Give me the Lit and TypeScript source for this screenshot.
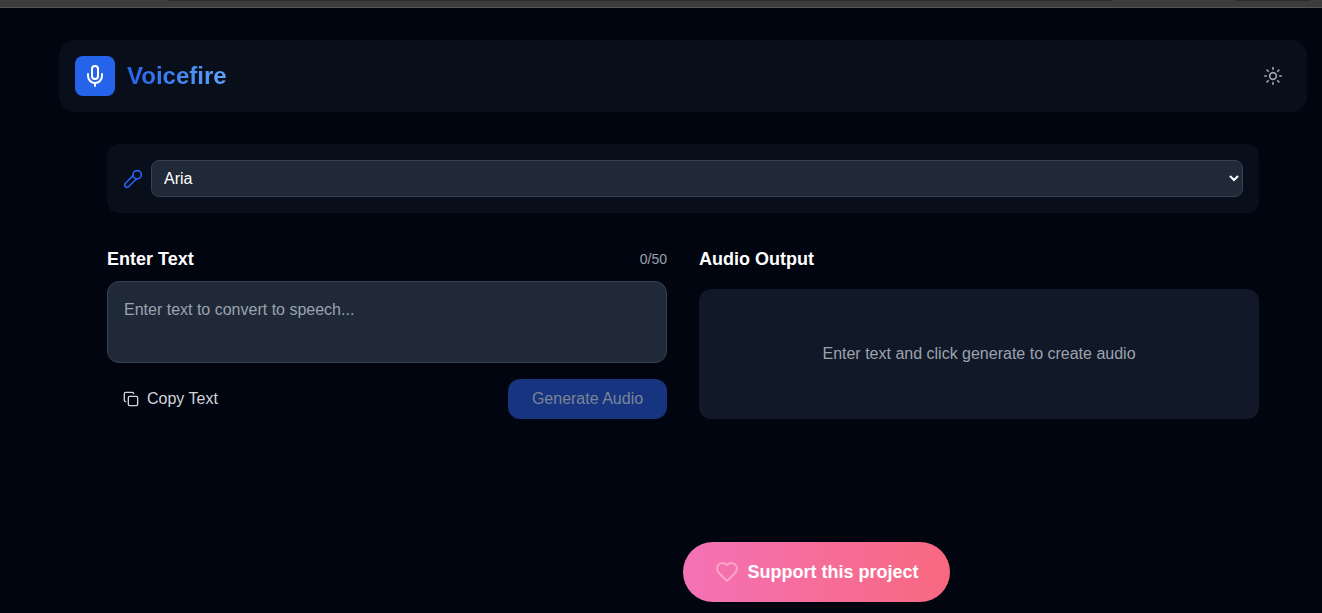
import { LitElement, css, html } from 'lit'
import { customElement } from 'lit/decorators.js'

@customElement('app-root')
export class AppRoot extends LitElement {
  static styles = css`
    :host {
      display: block;
      height: 613px;
      overflow: hidden;
      background: #01050f;
      font-family: "Liberation Sans", Arial, sans-serif;
      color: #fff;
    }
    /* sliver of the browser chrome along the top edge */
    .strip {
      height: 8px;
      background: #3c3c3c;
      border-bottom: 1px solid #555;
      box-sizing: border-box;
      display: flex;
      align-items: flex-start;
    }
    .tab {
      height: 1px;
      background: #2b2b2b;
    }
    .tab.one {
      width: 943px;
      margin-left: 168px;
    }
    .tab.two {
      width: 75px;
      margin-left: 124px;
    }
    .page {
      padding: 32px 15px 0 59px;
    }
    .header {
      height: 72px;
      box-sizing: border-box;
      padding: 16px;
      border-radius: 16px;
      background: #090e1b;
      display: flex;
      align-items: center;
      justify-content: space-between;
    }
    .brand {
      display: flex;
      align-items: center;
      gap: 12px;
    }
    .logo {
      width: 40px;
      height: 40px;
      border-radius: 8px;
      background: #2563eb;
      display: flex;
      align-items: center;
      justify-content: center;
    }
    .name {
      font-size: 24px;
      font-weight: 700;
      background: linear-gradient(to right, #2563eb, #60a5fa);
      -webkit-background-clip: text;
      background-clip: text;
      color: transparent;
    }
    .theme {
      display: flex;
      margin-right: 8px;
    }
    .main {
      width: 1152px;
      margin: 32px 0 0 48px;
    }
    .voice {
      height: 69px;
      box-sizing: border-box;
      padding: 16px;
      border-radius: 12px;
      background: #090e1b;
      display: flex;
      align-items: center;
      gap: 8px;
    }
    .voice svg {
      flex: none;
    }
    select {
      flex: 1;
      height: 37px;
      padding: 0 8px;
      border: 1px solid #374151;
      border-radius: 8px;
      background: #1f2937;
      color: #fff;
      font: 16px "Liberation Sans", Arial, sans-serif;
    }
    .columns {
      display: grid;
      grid-template-columns: 560px 560px;
      gap: 32px;
      margin-top: 32px;
    }
    .head {
      display: flex;
      align-items: center;
      justify-content: space-between;
      height: 28px;
    }
    h2 {
      margin: 0;
      font-size: 18px;
      line-height: 28px;
      font-weight: 700;
    }
    .count {
      font-size: 14px;
      color: #9ca3af;
    }
    textarea {
      display: block;
      width: 100%;
      height: 82px;
      box-sizing: border-box;
      margin-top: 8px;
      padding: 16px;
      border: 1px solid #374151;
      border-radius: 12px;
      background: #1f2937;
      color: #fff;
      resize: none;
      outline: none;
      font: 16px/24px "Liberation Sans", Arial, sans-serif;
    }
    textarea::placeholder {
      color: #9ca3af;
      opacity: 1;
    }
    .actions {
      display: flex;
      align-items: center;
      justify-content: space-between;
      margin-top: 16px;
    }
    .copy {
      display: flex;
      align-items: center;
      gap: 8px;
      padding: 8px 16px;
      border: 0;
      background: none;
      color: #d1d5db;
      font: 16px/24px "Liberation Sans", Arial, sans-serif;
    }
    .generate {
      width: 159px;
      height: 40px;
      border: 0;
      border-radius: 12px;
      background: #16347f;
      color: #7b8498;
      font: 16px/24px "Liberation Sans", Arial, sans-serif;
    }
    .output {
      height: 130px;
      margin-top: 16px;
      border-radius: 12px;
      background: #111827;
      color: #9ca3af;
      font-size: 16px;
      display: flex;
      align-items: center;
      justify-content: center;
    }
    /* the button starts at the middle of the main column */
    .footer {
      margin-top: 123px;
      padding-left: 50%;
    }
    .support {
      width: 267px;
      height: 60px;
      border: 0;
      border-radius: 30px;
      background: linear-gradient(to right, #f472b6, #f8687f);
      color: #fff;
      font: 700 18px/28px "Liberation Sans", Arial, sans-serif;
      display: flex;
      align-items: center;
      justify-content: center;
      gap: 9px;
    }
  `

  render() {
    return html`
      <div class="strip"><div class="tab one"></div><div class="tab two"></div></div>
      <div class="page">
        <header class="header">
          <div class="brand">
            <div class="logo">
              <svg width="24" height="24" viewBox="0 0 24 24" fill="none" stroke="#fff" stroke-width="2" stroke-linecap="round" stroke-linejoin="round">
                <path d="M12 2a3 3 0 0 0-3 3v7a3 3 0 0 0 6 0V5a3 3 0 0 0-3-3Z"></path>
                <path d="M19 10v2a7 7 0 0 1-14 0v-2"></path>
                <line x1="12" x2="12" y1="19" y2="22"></line>
              </svg>
            </div>
            <span class="name">Voicefire</span>
          </div>
          <div class="theme">
            <svg width="20" height="20" viewBox="0 0 24 24" fill="none" stroke="#9ca3af" stroke-width="2" stroke-linecap="round" stroke-linejoin="round">
              <circle cx="12" cy="12" r="4"></circle>
              <path d="M12 2v2M12 20v2M4.93 4.93l1.41 1.41M17.66 17.66l1.41 1.41M2 12h2M20 12h2M6.34 17.66l-1.41 1.41M19.07 4.93l-1.41 1.41"></path>
            </svg>
          </div>
        </header>
        <main class="main">
          <section class="voice">
            <svg width="20" height="20" viewBox="0 0 24 24" fill="none" stroke="#2563eb" stroke-width="2" stroke-linecap="round" stroke-linejoin="round">
              <path d="m12 8-9.04 9.06a2.82 2.82 0 1 0 3.98 3.98L16 12"></path>
              <circle cx="17" cy="7" r="5"></circle>
            </svg>
            <select><option>Aria</option></select>
          </section>
          <div class="columns">
            <section>
              <div class="head">
                <h2>Enter Text</h2>
                <span class="count">0/50</span>
              </div>
              <textarea placeholder="Enter text to convert to speech..."></textarea>
              <div class="actions">
                <button class="copy">
                  <svg width="16" height="16" viewBox="0 0 24 24" fill="none" stroke="currentColor" stroke-width="2" stroke-linecap="round" stroke-linejoin="round">
                    <rect width="14" height="14" x="8" y="8" rx="2" ry="2"></rect>
                    <path d="M4 16c-1.1 0-2-.9-2-2V4c0-1.1.9-2 2-2h10c1.1 0 2 .9 2 2"></path>
                  </svg>
                  Copy Text
                </button>
                <button class="generate">Generate Audio</button>
              </div>
            </section>
            <section>
              <div class="head"><h2>Audio Output</h2></div>
              <div class="output">Enter text and click generate to create audio</div>
            </section>
          </div>
          <div class="footer">
            <button class="support">
              <svg width="24" height="24" viewBox="0 0 24 24" fill="none" stroke="#fda4c8" stroke-width="2" stroke-linecap="round" stroke-linejoin="round">
                <path d="M19 14c1.49-1.46 3-3.21 3-5.5A5.5 5.5 0 0 0 16.5 3c-1.76 0-3 .5-4.5 2-1.5-1.5-2.74-2-4.5-2A5.5 5.5 0 0 0 2 8.5c0 2.3 1.5 4.05 3 5.5l7 7Z"></path>
              </svg>
              Support this project
            </button>
          </div>
        </main>
      </div>
    `
  }
}
